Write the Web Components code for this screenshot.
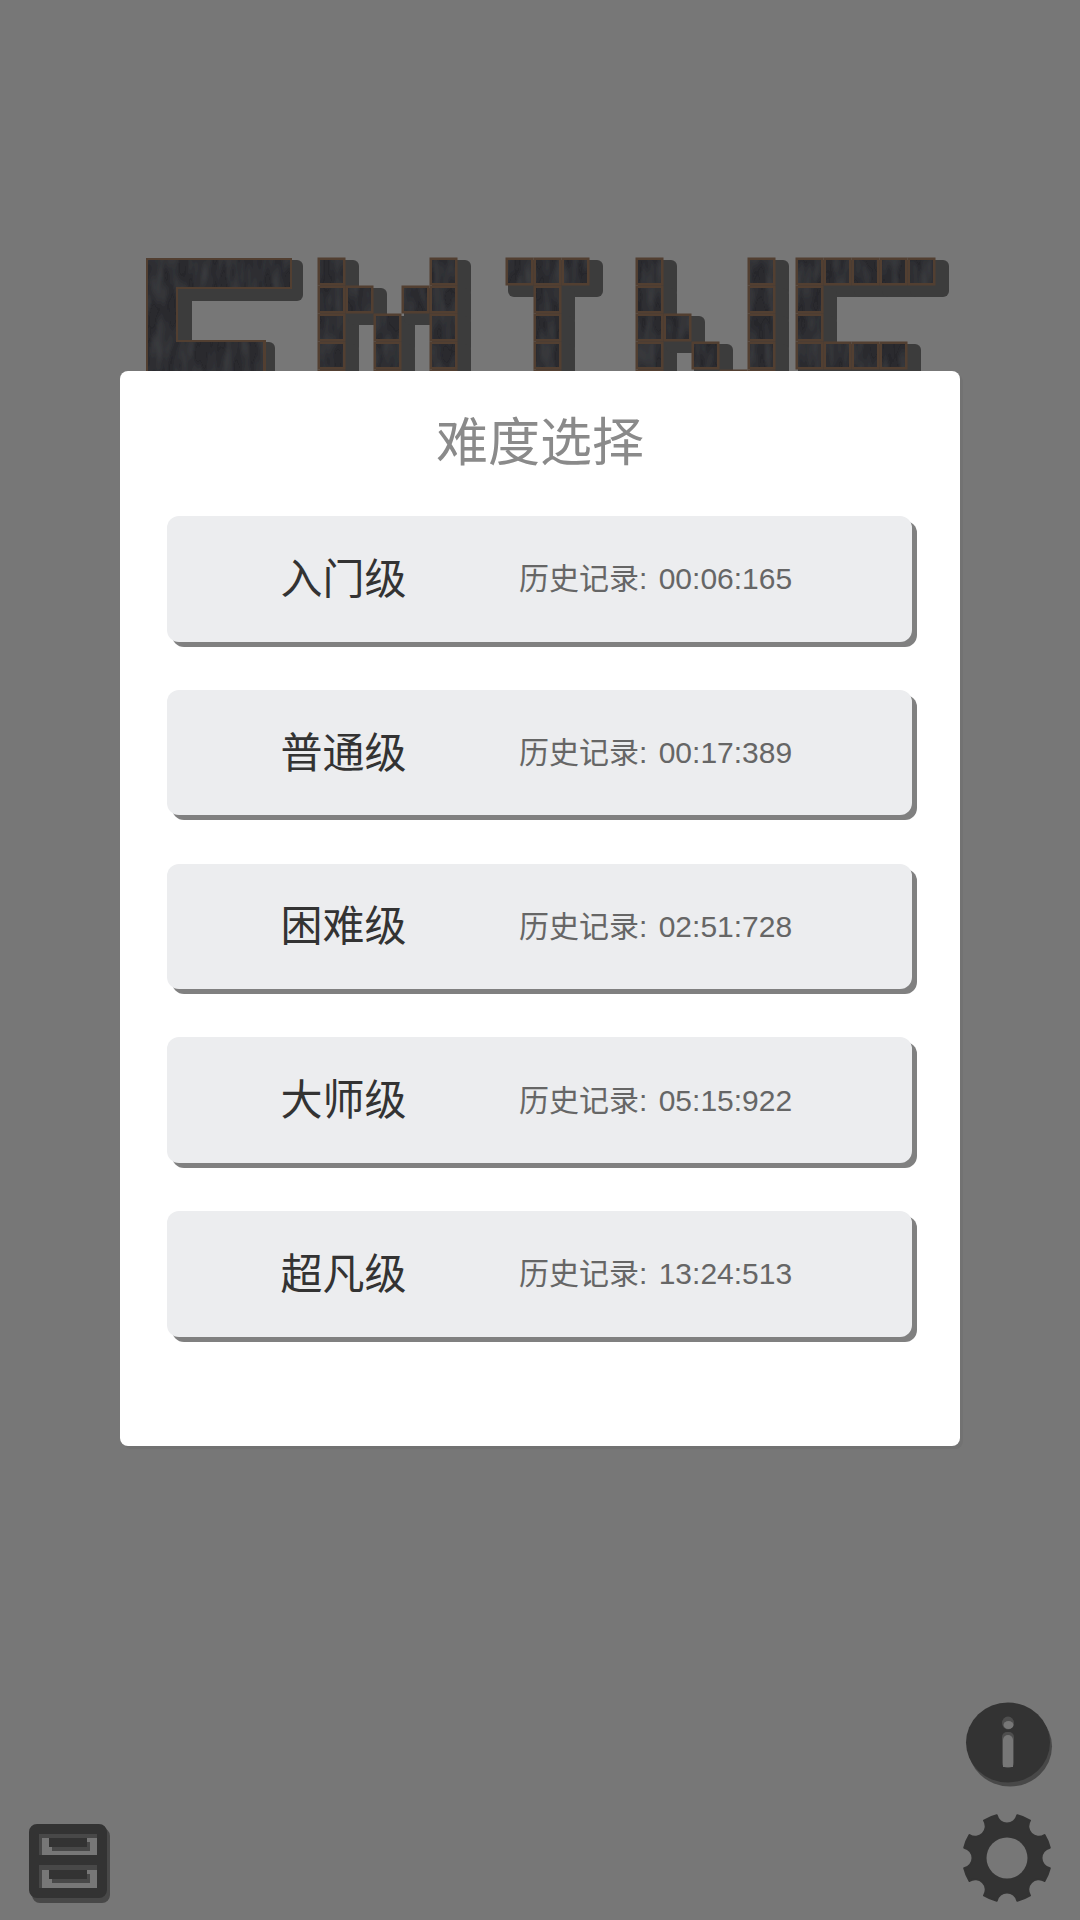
<!DOCTYPE html>
<html lang="zh">
<head>
<meta charset="utf-8">
<title>难度选择</title>
<style>
  html,body{margin:0;padding:0;background:#777;}
</style>
</head>
<body>
<game-app>
  <game-logo slot="logo"></game-logo>
  <diff-modal slot="modal" titulo="难度选择">
    <diff-row label="入门级" record="00:06:165"></diff-row>
    <diff-row label="普通级" record="00:17:389"></diff-row>
    <diff-row label="困难级" record="02:51:728"></diff-row>
    <diff-row label="大师级" record="05:15:922"></diff-row>
    <diff-row label="超凡级" record="13:24:513"></diff-row>
  </diff-modal>
  <icon-drawer slot="left"></icon-drawer>
  <icon-info slot="right"></icon-info>
  <icon-gear slot="right"></icon-gear>
</game-app>
<script>
const FONT='"Liberation Sans","Noto Sans CJK SC",sans-serif';

class GameApp extends HTMLElement{
    constructor(){
        super()
        this.attachShadow({mode:'open'});
    }
    connectedCallback(){
        this.shadowRoot.innerHTML=`
        <style>
          :host{
            display:flex;
            flex-direction:column;
            position:relative;
            width:1080px;
            height:1920px;
            overflow:hidden;
            background:#777;
            font-family:${FONT};
          }
          .top{flex:1;}
          .modal{position:absolute;top:371px;left:120px;}
          .bottom{
            display:flex;
            justify-content:space-between;
            align-items:flex-end;
            padding:0 27px 16px 29px;
          }
          .right{display:flex;flex-direction:column;align-items:center;gap:25px;}
        </style>
        <div class="top"><slot name="logo"></slot></div>
        <div class="modal"><slot name="modal"></slot></div>
        <div class="bottom">
          <div class="left"><slot name="left"></slot></div>
          <div class="right"><slot name="right"></slot></div>
        </div>`;
    }
}

class GameLogo extends HTMLElement{
    constructor(){
        super()
        this.attachShadow({mode:'open'});
    }
    // block letters: origin x, then [col,row] cells
    letters(){
        const bar=(c0,c1,r)=>{const o=[];for(let c=c0;c<=c1;c++)o.push([c,r]);return o};
        const col=(c,r0,r1)=>{const o=[];for(let r=r0;r<=r1;r++)o.push([c,r]);return o};
        return [
            {x:320,cells:[...col(0,0,4),[1,1],[2,2],[2,3],[2,4],[3,1],...col(4,0,4)]},
            {x:508,cells:[...bar(0,2,0),...col(1,1,4)]},
            {x:638,cells:[...col(0,0,4),[1,2],[2,3],[3,4],...col(4,0,4)]},
            {x:798,cells:[...bar(0,4,0),...col(0,1,3),...bar(1,3,3)]}
        ];
    }
    getSvg(){
        const P=28,Y=260;
        let shadow='',edge='',face='';
        // first letter is one solid piece, its shadow runs from the block edge
        shadow+=`<rect x="148" y="260" width="155" height="41" rx="6" fill="#3c3c3c"/>
                 <rect x="148" y="260" width="44" height="130" rx="6" fill="#3c3c3c"/>
                 <rect x="148" y="342" width="127" height="48" rx="6" fill="#3c3c3c"/>`;
        edge+=`<path d="M146 258H292V289H178V340H266V372H146Z" fill="#523f31"/>`;
        face+=`<path d="M148 260H290V287H176V342H263V372H148Z"/>`;
        for(const l of this.letters()){
            for(const [c,r] of l.cells){
                const x=l.x+c*P,y=Y+r*P;
                shadow+=`<rect x="${x}" y="${y}" width="39" height="37" rx="6" fill="#3c3c3c"/>`;
                edge+=`<rect x="${x-2.5}" y="${y-2.5}" width="28" height="28" fill="#523f31"/>`;
                face+=`<rect x="${x}" y="${y}" width="23" height="23"/>`;
            }
        }
        return `<svg width="1080" height="420" viewBox="0 0 1080 420" aria-hidden="true">
          <defs>
            <filter id="tex" x="0" y="0" width="100%" height="100%">
              <feTurbulence type="fractalNoise" baseFrequency="0.09 0.03" numOctaves="2" seed="7" result="n"/>
              <feColorMatrix in="n" type="matrix" values="0 0 0 0 .3  0 0 0 0 .32  0 0 0 0 .34  0 0 0 .14 -.045" result="c"/>
              <feComposite in="c" in2="SourceAlpha" operator="in" result="m"/>
              <feMerge><feMergeNode in="SourceGraphic"/><feMergeNode in="m"/></feMerge>
            </filter>
          </defs>
          ${shadow}${edge}
          <g fill="#2b2c2d" filter="url(#tex)">${face}</g>
        </svg>`;
    }
    connectedCallback(){
        this.shadowRoot.innerHTML=`
        <style>
          :host{display:block;height:420px;}
          svg{display:block;}
        </style>${this.getSvg()}`;
    }
}

class DiffModal extends HTMLElement{
    constructor(){
        super()
        this.attachShadow({mode:'open'});
        this.titulo=this.getAttribute('titulo');
    }
    connectedCallback(){
        this.shadowRoot.innerHTML=`
        <style>
          :host{
            display:block;
            box-sizing:border-box;
            width:840px;
            height:1075px;
            padding:0 48px 0 47px;
            background:#fff;
            border-radius:8px;
            box-shadow:3px 3px 0 #727272;
          }
          h1{
            margin:0;
            padding-left:1px;
            height:145px;
            line-height:145px;
            text-align:center;
            font-weight:400;
            font-size:52px;
            color:#8a8a8a;
          }
          .list{display:flex;flex-direction:column;gap:48.25px;}
        </style>
        <h1>${this.titulo}</h1>
        <div class="list"><slot></slot></div>`;
    }
}

class DiffRow extends HTMLElement{
    constructor(){
        super()
        this.attachShadow({mode:'open'});
        this.label=this.getAttribute('label');
        this.record=this.getAttribute('record');
    }
    connectedCallback(){
        this.shadowRoot.innerHTML=`
        <style>
          :host{
            display:flex;
            align-items:center;
            width:745px;
            height:125.5px;
            background:#ecedef;
            border-radius:12px;
            box-shadow:5px 5px 0 #808080;
          }
          .label{
            flex:0 0 353px;
            text-align:center;
            font-size:42px;
            color:#333;
            margin-top:-7px;
          }
          .record{
            margin-left:-1px;
            margin-top:-5px;
            font-size:30px;
            color:#666;
          }
          .time{margin-left:3px;}
        </style>
        <span class="label">${this.label}</span>
        <span class="record">历史记录: <span class="time">${this.record}</span></span>`;
    }
}

class IconDrawer extends HTMLElement{
    constructor(){
        super()
        this.attachShadow({mode:'open'});
    }
    connectedCallback(){
        this.shadowRoot.innerHTML=`
        <style>:host{display:block;width:82px;height:80px;}svg{display:block;}</style>
        <svg width="82" height="80" viewBox="0 0 82 80" aria-hidden="true">
          <g fill="none" stroke="#484848" stroke-width="10">
            <rect x="8" y="9" width="68" height="65" rx="3"/>
            <path d="M8 41H76"/>
          </g>
          <rect x="23" y="18" width="38" height="9" fill="#484848"/>
          <rect x="23" y="50" width="38" height="9" fill="#484848"/>
          <g fill="none" stroke="#333" stroke-width="10">
            <rect x="5" y="5" width="68" height="64" rx="3"/>
            <path d="M5 36H73"/>
          </g>
          <rect x="20" y="14" width="38" height="9" fill="#333"/>
          <rect x="20" y="46" width="38" height="9" fill="#333"/>
        </svg>`;
    }
}

class IconInfo extends HTMLElement{
    constructor(){
        super()
        this.attachShadow({mode:'open'});
    }
    connectedCallback(){
        this.shadowRoot.innerHTML=`
        <style>:host{display:block;width:88px;height:88px;margin-left:4px;}svg{display:block;}</style>
        <svg width="88" height="88" viewBox="0 0 88 88" aria-hidden="true">
          <ellipse cx="45" cy="47.5" rx="42" ry="40" fill="#484848"/>
          <ellipse cx="43" cy="43.5" rx="42" ry="40" fill="#333"/>
          <ellipse cx="43" cy="24" rx="6" ry="6.5" fill="#4e4e4e"/>
          <ellipse cx="43.5" cy="26" rx="5" ry="4" fill="#777"/>
          <rect x="37" y="33" width="12" height="36" rx="5" fill="#4e4e4e"/>
          <path d="M38 41a5 5 0 0 1 10 0V68H38Z" fill="#777"/>
        </svg>`;
    }
}

class IconGear extends HTMLElement{
    constructor(){
        super()
        this.attachShadow({mode:'open'});
    }
    getPath(){
        const R=44,c=46,half=9,rad=d=>d*Math.PI/180;
        const pt=d=>`${(c+R*Math.cos(rad(d))).toFixed(2)} ${(c+R*Math.sin(rad(d))).toFixed(2)}`;
        let d='';
        for(let k=0;k<8;k++){
            const a=22.5+45*k;
            d+=(k==0?'M':'L')+pt(a-half)+`A${R} ${R} 0 0 1 ${pt(a+half)}`;
            d+=`A10.5 10.5 0 0 0 ${pt(a+45-half)}`;
        }
        return d+'Z';
    }
    connectedCallback(){
        this.shadowRoot.innerHTML=`
        <style>:host{display:block;width:92px;height:92px;}svg{display:block;}</style>
        <svg width="92" height="92" viewBox="0 0 92 92" aria-hidden="true">
          <path d="${this.getPath()}" fill="#333" stroke="#333" stroke-width="2" stroke-linejoin="round"/>
          <circle cx="46" cy="46" r="20.5" fill="#777"/>
        </svg>`;
    }
}

customElements.define('game-app',GameApp);
customElements.define('game-logo',GameLogo);
customElements.define('diff-modal',DiffModal);
customElements.define('diff-row',DiffRow);
customElements.define('icon-drawer',IconDrawer);
customElements.define('icon-info',IconInfo);
customElements.define('icon-gear',IconGear);
</script>
</body>
</html>
